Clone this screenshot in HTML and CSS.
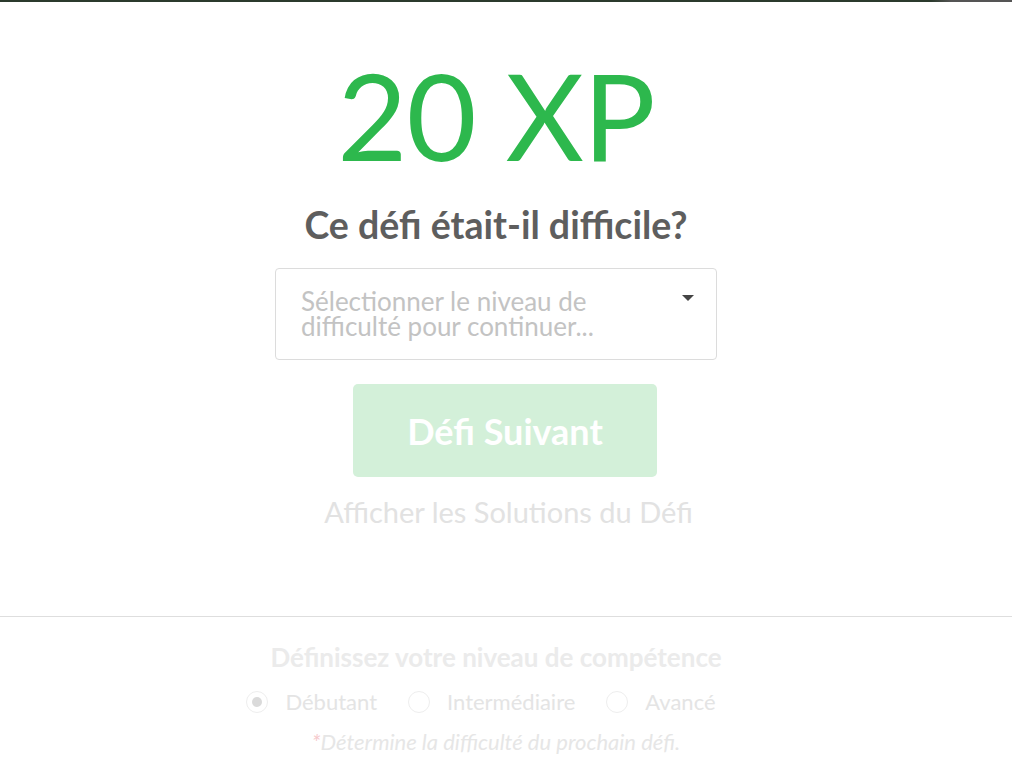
FILE: index.html
```html
<!DOCTYPE html>
<html lang="fr">
<head>
<meta charset="utf-8">
<link rel="stylesheet" href="styles.css">
</head>
<body>
<div class="topbar"></div>
<main class="main">
  <div class="xp">20 XP</div>
  <h2 class="question">Ce défi était-il difficile?</h2>
  <div class="select">
    <span class="placeholder">Sélectionner le niveau de difficulté pour continuer...</span>
    <span class="caret"></span>
  </div>
  <button class="next">Défi Suivant</button>
  <a class="solutions">Afficher les Solutions du Défi</a>
</main>
<hr class="divider">
<section class="skill">
  <h3 class="skill-title">Définissez votre niveau de compétence</h3>
  <div class="radios">
    <label class="radio"><span class="dot checked"></span>Débutant</label>
    <label class="radio"><span class="dot"></span>Intermédiaire</label>
    <label class="radio"><span class="dot"></span>Avancé</label>
  </div>
  <p class="note"><span class="star">*</span>Détermine la difficulté du prochain défi.</p>
</section>
</body>
</html>
```
FILE: styles.css
```css
html, body {
  margin: 0;
  padding: 0;
  background: #fff;
  font-family: Lato, "Liberation Sans", sans-serif;
}
.topbar {
  height: 2px;
  background: linear-gradient(to right, #2b3a2d 0%, #2b3a2d 92%, #555 94%, #555 100%);
}
.main {
  display: flex;
  flex-direction: column;
  align-items: center;
  padding-right: 20px;
  padding-top: 43px;
}
.xp {
  font-size: 121px;
  line-height: 140px;
  color: #2db84d;
  font-weight: 400;
  letter-spacing: -1px;
}
.question {
  margin: 18px 0 0 0;
  font-size: 37.5px;
  line-height: 44px;
  font-weight: 700;
  color: #5e5e5e;
}
.select {
  margin-top: 21px;
  width: 440px;
  height: 90px;
  border: 1px solid #dcdcdc;
  border-radius: 4px;
  display: flex;
  align-items: flex-start;
  justify-content: space-between;
}
.placeholder {
  padding: 20px 0 0 25px;
  width: 340px;
  font-size: 26px;
  line-height: 25px;
  color: #c3c3c3;
}
.caret {
  margin: 26px 22px 0 0;
  width: 0;
  height: 0;
  border-left: 6.5px solid transparent;
  border-right: 6.5px solid transparent;
  border-top: 6.5px solid #444;
}
.next {
  margin-top: 24px;
  margin-left: 18px;
  width: 304px;
  height: 93px;
  border: none;
  border-radius: 5px;
  background: #d3f0d9;
  color: #fff;
  font-family: Lato, "Liberation Sans", sans-serif;
  font-size: 36px;
  font-weight: 700;
}
.solutions {
  margin-top: 18px;
  margin-left: 25px;
  font-size: 29px;
  line-height: 34px;
  color: #e2e2e2;
}
.divider {
  margin: 87px 0 0 0;
  border: none;
  border-top: 1px solid #dedede;
  height: 0;
}
.skill {
  display: flex;
  flex-direction: column;
  align-items: center;
  padding-right: 20px;
  padding-top: 24px;
}
.skill-title {
  margin: 0;
  font-size: 26px;
  line-height: 32px;
  font-weight: 700;
  color: #ebebeb;
}
.radios {
  margin-top: 14px;
  display: flex;
  gap: 31px;
  padding-right: 30px;
}
.radio {
  display: flex;
  align-items: center;
  gap: 17px;
  font-size: 22px;
  line-height: 30px;
  color: #e4e4e4;
}
.dot {
  width: 22px;
  height: 22px;
  border: 1px solid #eeeeee;
  border-radius: 50%;
  box-sizing: border-box;
  display: flex;
  align-items: center;
  justify-content: center;
}
.dot.checked::after {
  content: "";
  width: 10px;
  height: 10px;
  border-radius: 50%;
  background: #dadada;
}
.note {
  margin: 12px 0 0 0;
  font-size: 22px;
  line-height: 26px;
  font-style: italic;
  color: #e6e6e6;
}
.star {
  color: #f6c9cc;
}
```
